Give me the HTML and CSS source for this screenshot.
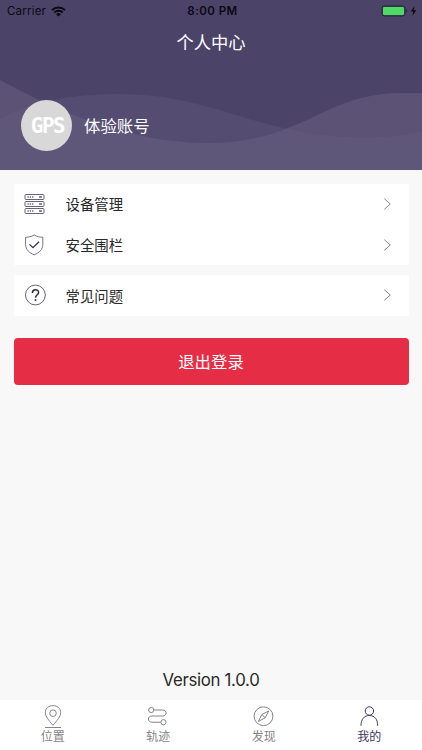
FILE: index.html
```html
<!DOCTYPE html>
<html lang="zh-CN">
<head>
    <meta charset="UTF-8">
    <meta name="viewport" content="width=device-width, initial-scale=1.0">
    <title>个人中心</title>
    <link rel="stylesheet" href="styles.css">
</head>
<body>
    <header class="header">
        <svg class="waves" viewBox="0 0 422 170" preserveAspectRatio="none">
            <path class="wave-back" d="M0 119C35 100 75 94 120 94C190 94 238 119 288 129C345 141 385 139 422 132V170H0Z"/>
            <path class="wave-front" d="M0 80C60 112 130 143 208 143C302 143 325 93 400 93L422 93V170H0Z"/>
        </svg>
        <div class="status-bar">
            <div class="carrier">
                <span>Carrier</span>
                <svg width="15" height="11" viewBox="0 0 15 11">
                    <path d="M1 4.1a9.2 9.2 0 0 1 13 0M3.3 6.5a5.9 5.9 0 0 1 8.4 0" fill="none" stroke="#0b0911" stroke-width="2"/>
                    <path d="M7.5 10.6L5.1 8.2a3.4 3.4 0 0 1 4.8 0z" fill="#0b0911"/>
                </svg>
            </div>
            <div class="time">8:00 PM</div>
            <div class="power">
                <svg width="36" height="12" viewBox="0 0 36 12">
                    <rect x="0" y="1" width="23" height="10" rx="2.5" fill="none" stroke="#292239"/>
                    <rect x="1" y="2" width="21" height="8" rx="1.3" fill="#4cd964"/>
                    <path d="M24.2 4.3c1.3.5 1.3 2.9 0 3.4z" fill="#292239"/>
                    <path d="M32.6 1L28.7 6.6H31.3L30.3 11L34.3 5.2H31.7z" fill="#0b0911"/>
                </svg>
            </div>
        </div>
        <h1 class="title">个人中心</h1>
        <div class="user">
            <div class="avatar"><span>GPS</span></div>
            <div class="username">体验账号</div>
        </div>
    </header>

    <main class="content">
        <ul class="card">
            <li class="row">
                <svg class="row-icon" width="22" height="22" viewBox="0 0 22 22">
                    <g fill="none" stroke="#67617b">
                        <rect x="1" y="1.5" width="19" height="5" rx="1"/>
                        <rect x="1" y="8.5" width="19" height="5" rx="1"/>
                        <rect x="1" y="15.5" width="19" height="5" rx="1"/>
                        <path stroke-width="1.4" stroke-dasharray="1.3 1" d="M3.5 4h6M3.5 11h6M3.5 18h6"/>
                        <path stroke-width="1.6" d="M15 4h3M15 11h3M15 18h3"/>
                    </g>
                </svg>
                <span class="row-label">设备管理</span>
                <svg class="arrow" width="9" height="12" viewBox="0 0 9 12"><path d="M1.3.7L7.3 6L1.3 11.3"/></svg>
            </li>
            <li class="row">
                <svg class="row-icon" width="22" height="22" viewBox="0 0 22 22">
                    <path d="M10.2 1C7.5 2.5 4.5 3.3 1.6 3.2V10.5C1.6 15.5 5.4 19 10.2 20.8C15 19 18.8 15.5 18.8 10.5V3.2C15.9 3.3 12.9 2.5 10.2 1Z" fill="none" stroke="#77718a"/>
                    <path d="M5.5 10.4L9 13.7L15 7.7" fill="none" stroke="#39324c" stroke-width="1.3"/>
                </svg>
                <span class="row-label">安全围栏</span>
                <svg class="arrow" width="9" height="12" viewBox="0 0 9 12"><path d="M1.3.7L7.3 6L1.3 11.3"/></svg>
            </li>
        </ul>

        <ul class="card">
            <li class="row">
                <svg class="row-icon" width="22" height="22" viewBox="0 0 22 22">
                    <circle cx="11.4" cy="11" r="9.9" fill="none" stroke="#67617b"/>
                    <path d="M8.4 9C8.3 4.8 14.6 4.9 14.6 8.500C14.6 10.7 11.5 10.8 11.5 13.7" fill="none" stroke="#332c46" stroke-width="1.5"/>
                    <circle cx="11.5" cy="16" r="1" fill="#332c46"/>
                </svg>
                <span class="row-label">常见问题</span>
                <svg class="arrow" width="9" height="12" viewBox="0 0 9 12"><path d="M1.3.7L7.3 6L1.3 11.3"/></svg>
            </li>
        </ul>

        <button class="logout">退出登录</button>
        <p class="version">Version 1.0.0</p>
    </main>

    <nav class="tabbar">
        <a class="tab">
            <svg width="24" height="24" viewBox="0 0 24 24">
                <path d="M12 20.3C8 15.5 4.3 11.5 4.3 7.8C4.3 3.3 7.7.6 12 .6S19.7 3.3 19.7 7.8C19.7 11.5 16 15.5 12 20.3ZM4 22.5H20"/>
                <circle cx="12" cy="8.2" r="3.3"/>
            </svg>
            <span>位置</span>
        </a>
        <a class="tab">
            <svg width="24" height="24" viewBox="0 0 24 24">
                <circle cx="5.2" cy="5" r="2.6"/>
                <circle cx="17.5" cy="17.2" r="2.6"/>
                <path d="M7.8 5H16.5C21.3 5 21.3 11 16.5 11H6C1.2 11 1.2 17.200 6 17.2H14.9"/>
            </svg>
            <span>轨迹</span>
        </a>
        <a class="tab">
            <svg width="24" height="24" viewBox="0 0 24 24">
                <circle cx="11.5" cy="11.2" r="9.4"/>
                <path d="M16.7 6L13.2 12.8L6.3 16.5L9.8 9.5ZM9.8 9.5L13.2 12.8"/>
            </svg>
            <span>发现</span>
        </a>
        <a class="tab active">
            <svg width="24" height="24" viewBox="0 0 24 24">
                <circle cx="12.4" cy="6" r="4.2"/>
                <path d="M4 20.8C4 14.5 7 10.5 12.4 10.5S20.7 14.5 20.7 20.8"/>
            </svg>
            <span>我的</span>
        </a>
    </nav>
</body>
</html>
```
FILE: styles.css
```css
* {
    box-sizing: border-box;
}
body {
    margin: 0;
    height: 100vh;
    display: flex;
    flex-direction: column;
    background-color: #f8f8f8;
    color: #292929;
    font-family: "Inter", "Noto Sans CJK SC", sans-serif;
    overflow: hidden;
}
.header {
    position: relative;
    height: 170px;
    flex-shrink: 0;
    background-color: #4c4369;
    color: #fff;
}
/* waves lie behind the header text */
.waves {
    position: absolute;
    top: 0;
    left: 0;
    width: 100%;
    height: 100%;
}
.wave-back {
    fill: #554c72;
}
.wave-front {
    fill: #696181;
    fill-opacity: 0.5;
}
.status-bar,
.title,
.user {
    position: relative;
}
.status-bar {
    display: grid;
    grid-template-columns: 1fr auto 1fr;
    align-items: center;
    height: 22px;
    padding: 0 4px 0 7px;
    color: #0b0911;
    font-size: 11.5px;
}
.carrier {
    display: flex;
    align-items: center;
    gap: 5px;
    letter-spacing: 0.2px;
}
.time {
    font-weight: 600;
    letter-spacing: 0.45px;
}
.power {
    display: flex;
    justify-content: flex-end;
}
.power svg {
    overflow: visible;
}
.title {
    margin: 0;
    height: 42px;
    line-height: 42px;
    text-align: center;
    font-size: 17.3px;
    font-weight: 400;
}
.user {
    display: flex;
    align-items: center;
    gap: 12px;
    margin-top: 36px;
    padding-left: 21px;
}
.avatar {
    display: flex;
    align-items: center;
    justify-content: center;
    width: 51px;
    height: 51px;
    border-radius: 50%;
    background-color: #d8d8d8;
}
.avatar span {
    font-family: "DejaVu Sans Mono", monospace;
    font-size: 22px;
    font-weight: 700;
    letter-spacing: -1.6px;
    margin-right: -1.6px;
    transform: scaleX(0.95);
}
.username {
    font-size: 16.4px;
    padding-bottom: 2px;
}
.content {
    flex: 1;
    display: flex;
    flex-direction: column;
    padding: 13.5px 13.5px 0;
}
.card {
    margin: 0 0 10px;
    padding: 0;
    list-style: none;
    background-color: #fff;
}
.row {
    display: flex;
    align-items: center;
    height: 40.8px;
    padding: 0 17px 0 10.5px;
}
.row-label {
    flex: 1;
    margin-left: 19.5px;
    font-size: 14.4px;
}
.arrow path {
    fill: none;
    stroke: #858585;
}
.logout {
    height: 47px;
    margin-top: 12px;
    padding: 0;
    border: none;
    border-radius: 4px;
    background-color: #e52d45;
    color: #fff;
    font-family: inherit;
    font-size: 16.4px;
}
.version {
    margin: auto 0 9px;
    line-height: 22px;
    text-align: center;
    font-size: 16.8px;
    letter-spacing: -0.3px;
}
.tabbar {
    display: flex;
    height: 50px;
    flex-shrink: 0;
    background-color: #fff;
}
.tab {
    flex: 1;
    display: flex;
    flex-direction: column;
    align-items: center;
    gap: 1px;
    padding-top: 5px;
    color: #858585;
    font-size: 12px;
    line-height: 14px;
}
.tab svg {
    fill: none;
    stroke: currentColor;
}
.tab.active {
    color: #40365f;
}
```
